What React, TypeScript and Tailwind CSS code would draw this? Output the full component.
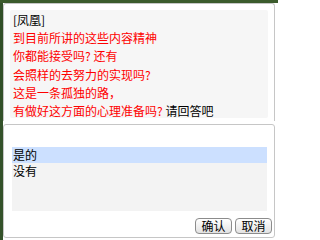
const font = "font-['SimSun','Noto_Sans_CJK_SC',sans-serif]";

function Btn({ label }: { label: string }) {
	return (
		<button className="h-[16px] w-[37px] rounded-[4px] border border-[#8c8c8c] bg-gradient-to-b from-white to-[#e2e2e2] text-[12px] leading-[14px] text-black">
			{label}
		</button>
	);
}

export default function App() {
	return (
		<div
			className={`flex w-[278px] h-[240px] flex-col overflow-hidden bg-white ${font}`}
		>
			<div className="h-[3px] shrink-0 bg-[#3b5b2c]" />
			<div className="flex flex-1">
				<div className="w-[3px] shrink-0 bg-[#34522a]" />
				<div className="flex w-[272px] flex-col">
					<section className="h-[118px] rounded-t-[3px] border-x border-t border-[#c6c6c6] px-[6px] pt-[6px]">
						<div className="h-[108px] w-[258px] overflow-hidden rounded-[2px] bg-[#f6f6f6] pl-[3px] pt-[1px] text-[12px] leading-[18.2px]">
							<p className="text-black">[凤凰]</p>
							<p className="text-[#ff0000]">到目前所讲的这些内容精神</p>
							<p className="text-[#ff0000]">你都能接受吗? 还有</p>
							<p className="text-[#ff0000]">会照样的去努力的实现吗?</p>
							<p className="text-[#ff0000]">这是一条孤独的路，</p>
							<p>
								<span className="text-[#ff0000]">有做好这方面的心理准备吗?</span>
								<span className="text-black"> 请回答吧</span>
							</p>
						</div>
					</section>
					<section className="mt-[3px] flex h-[114px] flex-col rounded-[3px] border border-[#c6c6c6] pt-[22px]">
						<ul className="ml-[8px] h-[64px] w-[255px] bg-[#f3f3f3] text-[12px] leading-[15.5px] text-black">
							<li className="bg-[#cce0ff] pl-[1px]">是的</li>
							<li className="pl-[1px]">没有</li>
						</ul>
						<div className="mt-[7px] flex justify-end gap-[3px] pr-[2px]">
							<Btn label="确认" />
							<Btn label="取消" />
						</div>
					</section>
				</div>
			</div>
		</div>
	);
}
